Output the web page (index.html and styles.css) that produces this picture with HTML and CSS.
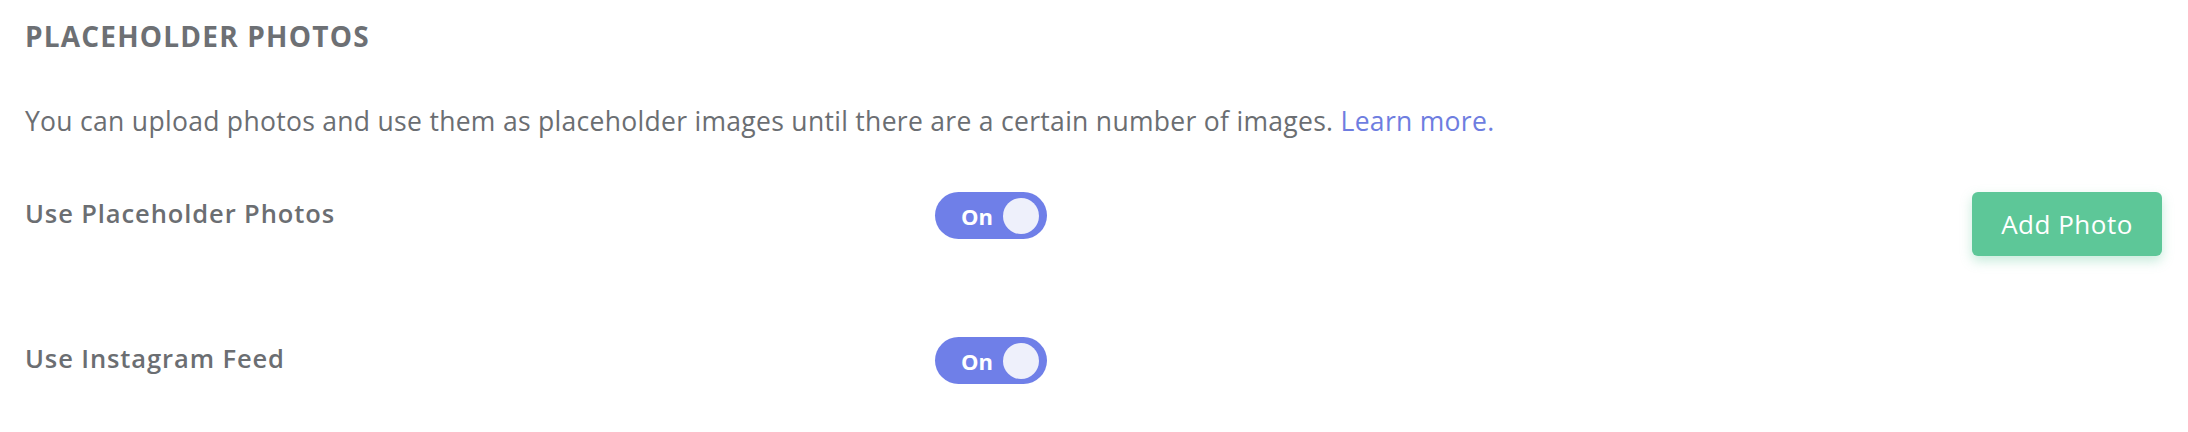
FILE: index.html
```html
<!DOCTYPE html>
<html>
<head>
<meta charset="utf-8">
<link rel="stylesheet" href="styles.css">
</head>
<body>
<div class="page">
  <h2 class="title">PLACEHOLDER PHOTOS</h2>
  <p class="desc">You can upload photos and use them as placeholder images until there are a certain number of images. <a class="link" href="#">Learn more.</a></p>
  <div class="row row-first">
    <div class="label">Use Placeholder Photos</div>
    <div class="toggle"><span class="toggle-text">On</span><span class="knob"></span></div>
    <button class="btn">Add Photo</button>
  </div>
  <div class="row row-second">
    <div class="label">Use Instagram Feed</div>
    <div class="toggle"><span class="toggle-text">On</span><span class="knob"></span></div>
  </div>
</div>
</body>
</html>
```

FILE: styles.css
```css
html, body {
  margin: 0;
  padding: 0;
  background: #ffffff;
}
.page {
  padding: 20px 26px 0 25px;
  font-family: "Open Sans", Lato, sans-serif;
  color: #6b6e72;
}
.title {
  margin: 0;
  font-size: 28px;
  line-height: 32px;
  font-weight: 700;
  letter-spacing: 1.2px;
  color: #6d7074;
}
.desc {
  margin: 53px 0 0 0;
  font-size: 26.5px;
  line-height: 32px;
  font-weight: 400;
  letter-spacing: 0.3px;
  color: #6b6e72;
}
.link {
  color: #6e7de0;
  text-decoration: none;
}
.row {
  display: flex;
  align-items: flex-start;
}
.row-first {
  margin-top: 55px;
  height: 64px;
}
.row-second {
  margin-top: 81px;
}
.label {
  width: 910px;
  margin-top: 5px;
  font-size: 25.5px;
  line-height: 32px;
  font-weight: 600;
  letter-spacing: 0.9px;
  color: #6b6e72;
}
.toggle {
  width: 112px;
  height: 47px;
  box-sizing: border-box;
  border-radius: 24px;
  background: #6f7fe8;
  display: flex;
  align-items: center;
  padding: 0 8px 0 26px;
}
.toggle-text {
  flex: 1;
  color: #ffffff;
  font-size: 22px;
  font-weight: 700;
  line-height: 1;
}
.knob {
  width: 36px;
  height: 36px;
  border-radius: 50%;
  background: #eef0fb;
}
.btn {
  margin-left: auto;
  width: 190px;
  height: 64px;
  border: none;
  border-radius: 6px;
  background: #5dc798;
  color: #ffffff;
  font-family: "Open Sans", Lato, sans-serif;
  font-size: 26px;
  font-weight: 400;
  letter-spacing: 0.5px;
  box-shadow: 0 5px 12px rgba(93, 199, 152, 0.35);
  padding: 0;
}
```
